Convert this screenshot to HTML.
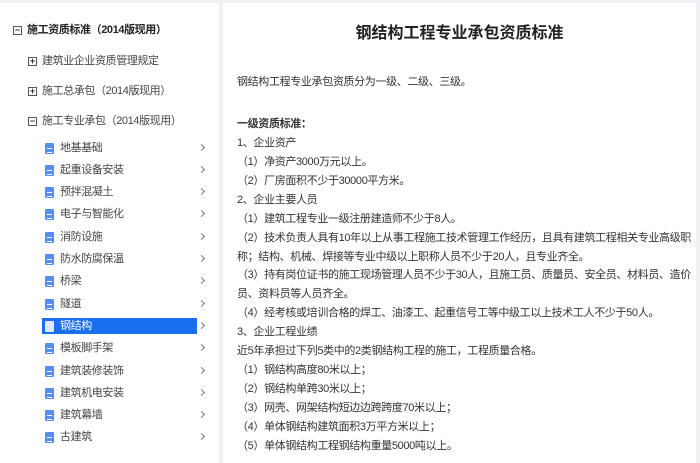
<!DOCTYPE html>
<html><head><meta charset="utf-8"><style>
*{margin:0;padding:0;box-sizing:border-box}
body{width:700px;height:452px;background:#eef0f4;position:relative;overflow:hidden;font-family:"Liberation Sans","Noto Sans CJK SC",sans-serif;color:#333}
.side{position:absolute;left:0;top:3px;width:219px;height:460px;background:#fff}
.main{position:absolute;left:223px;top:3px;width:473px;height:460px;background:#fff}
.t{position:absolute;white-space:nowrap;font-size:11px;line-height:14px;letter-spacing:-0.4px;color:#444}
.box{position:absolute;width:9px;height:9px;border:1px solid #555;font-size:9px;line-height:7px;text-align:center;color:#333;font-weight:bold}
.ic{position:absolute;left:45px;width:9px;height:11px;background:#5b8def;border-radius:1px}
.ic:after{content:"";position:absolute;left:2px;top:5px;width:5px;height:3px;border-top:1px solid #fff;border-bottom:1px solid #fff}
.ar{position:absolute;left:199px;width:5px;height:5px;border-right:1px solid #777;border-top:1px solid #777;transform:rotate(45deg)}
.c{position:absolute;left:237px;white-space:nowrap;font-size:11px;line-height:14px;letter-spacing:-0.35px;color:#333}
</style></head><body>
<div class="side"></div><div class="main"></div>
<div class="box" style="left:13px;top:26px">−</div>
<div class="t" style="left:27px;top:23px;font-weight:bold;color:#222">施工资质标准（2014版现用）</div>
<div class="box" style="left:28px;top:57px">+</div>
<div class="t" style="left:42px;top:54px">建筑业企业资质管理规定</div>
<div class="box" style="left:28px;top:87px">+</div>
<div class="t" style="left:42px;top:84px">施工总承包（2014版现用）</div>
<div class="box" style="left:28px;top:117px">−</div>
<div class="t" style="left:42px;top:114px">施工专业承包（2014版现用）</div>
<div style="position:absolute;left:42px;top:318px;width:155px;height:16px;background:#1a6ff0"></div>
<div class="ic" style="top:143px"></div><div class="t" style="left:60px;top:141px">地基基础</div><div class="ar" style="top:145px"></div>
<div class="ic" style="top:165px"></div><div class="t" style="left:60px;top:163px">起重设备安装</div><div class="ar" style="top:167px"></div>
<div class="ic" style="top:187px"></div><div class="t" style="left:60px;top:185px">预拌混凝土</div><div class="ar" style="top:189px"></div>
<div class="ic" style="top:209px"></div><div class="t" style="left:60px;top:207px">电子与智能化</div><div class="ar" style="top:211px"></div>
<div class="ic" style="top:232px"></div><div class="t" style="left:60px;top:230px">消防设施</div><div class="ar" style="top:234px"></div>
<div class="ic" style="top:254px"></div><div class="t" style="left:60px;top:252px">防水防腐保温</div><div class="ar" style="top:256px"></div>
<div class="ic" style="top:276px"></div><div class="t" style="left:60px;top:274px">桥梁</div><div class="ar" style="top:278px"></div>
<div class="ic" style="top:299px"></div><div class="t" style="left:60px;top:297px">隧道</div><div class="ar" style="top:301px"></div>
<div class="ic" style="top:321px;background:#fff;opacity:.85"></div><div class="t" style="left:60px;top:319px;color:#fff">钢结构</div><div class="ar" style="top:323px"></div>
<div class="ic" style="top:343px"></div><div class="t" style="left:60px;top:341px">模板脚手架</div><div class="ar" style="top:345px"></div>
<div class="ic" style="top:366px"></div><div class="t" style="left:60px;top:364px">建筑装修装饰</div><div class="ar" style="top:368px"></div>
<div class="ic" style="top:388px"></div><div class="t" style="left:60px;top:386px">建筑机电安装</div><div class="ar" style="top:390px"></div>
<div class="ic" style="top:410px"></div><div class="t" style="left:60px;top:408px">建筑幕墙</div><div class="ar" style="top:412px"></div>
<div class="ic" style="top:432px"></div><div class="t" style="left:60px;top:430px">古建筑</div><div class="ar" style="top:434px"></div>

<div style="position:absolute;left:223px;width:473px;top:24px;text-align:center;font-size:16px;font-weight:bold;color:#222;line-height:20px">钢结构工程专业承包资质标准</div>
<div class="c" style="top:75px">钢结构工程专业承包资质分为一级、二级、三级。</div>
<div class="c" style="top:117px;font-weight:bold">一级资质标准：</div>
<div class="c" style="top:136px">1、企业资产</div>
<div class="c" style="top:155px">（1）净资产3000万元以上。</div>
<div class="c" style="top:174px">（2）厂房面积不少于30000平方米。</div>
<div class="c" style="top:193px">2、企业主要人员</div>
<div class="c" style="top:212px">（1）建筑工程专业一级注册建造师不少于8人。</div>
<div class="c" style="top:231px">（2）技术负责人具有10年以上从事工程施工技术管理工作经历，且具有建筑工程相关专业高级职</div>
<div class="c" style="top:250px">称；结构、机械、焊接等专业中级以上职称人员不少于20人，且专业齐全。</div>
<div class="c" style="top:268px">（3）持有岗位证书的施工现场管理人员不少于30人，且施工员、质量员、安全员、材料员、造价</div>
<div class="c" style="top:287px">员、资料员等人员齐全。</div>
<div class="c" style="top:306px">（4）经考核或培训合格的焊工、油漆工、起重信号工等中级工以上技术工人不少于50人。</div>
<div class="c" style="top:325px">3、企业工程业绩</div>
<div class="c" style="top:344px">近5年承担过下列5类中的2类钢结构工程的施工，工程质量合格。</div>
<div class="c" style="top:363px">（1）钢结构高度80米以上；</div>
<div class="c" style="top:382px">（2）钢结构单跨30米以上；</div>
<div class="c" style="top:401px">（3）网壳、网架结构短边边跨跨度70米以上；</div>
<div class="c" style="top:420px">（4）单体钢结构建筑面积3万平方米以上；</div>
<div class="c" style="top:439px">（5）单体钢结构工程钢结构重量5000吨以上。</div>
</body></html>
